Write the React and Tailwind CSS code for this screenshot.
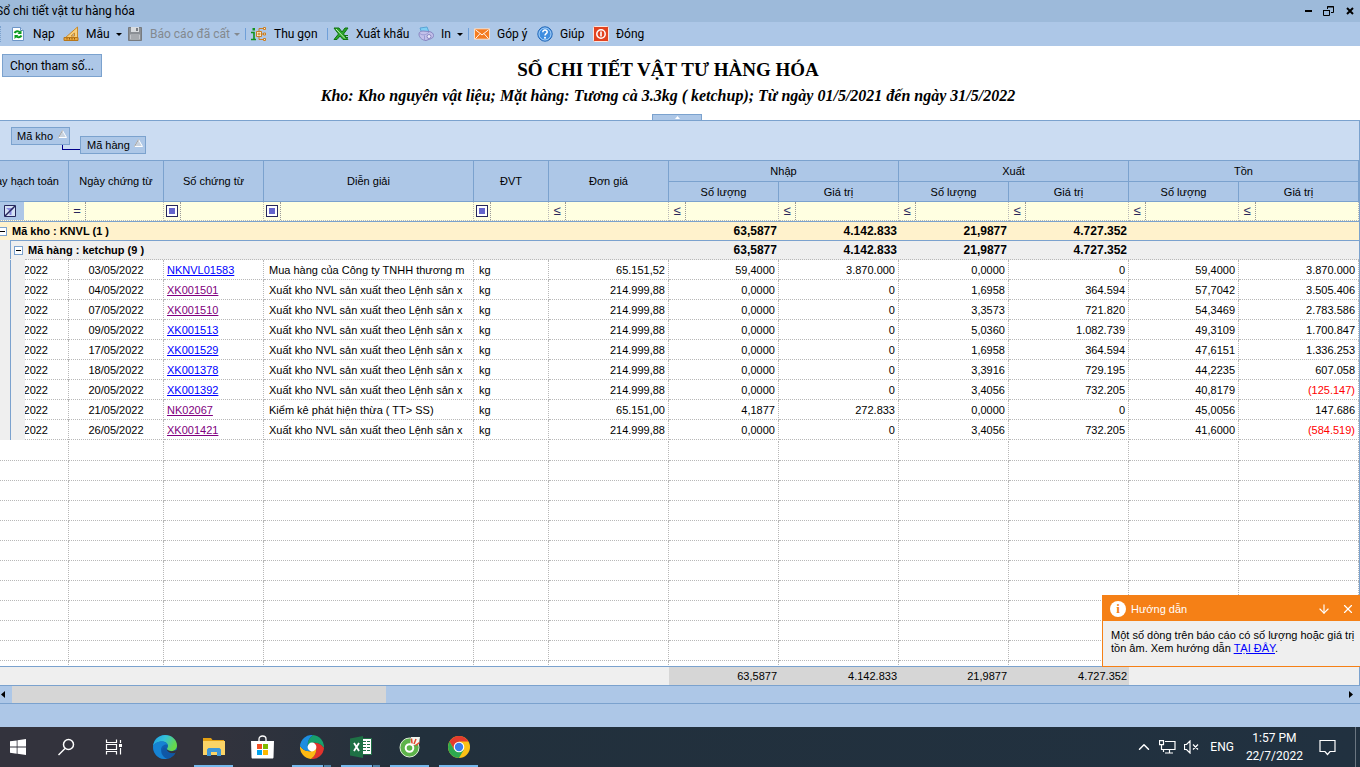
// App.jsx
import React from "react";
import clsx from "clsx";
import { ArrowDown, ChevronUp, X } from "lucide-react";

const rows = [
  ["03/05/2022", "NKNVL01583", "Mua hàng của Công ty TNHH thương m", "65.151,52", "59,4000", "3.870.000", "0,0000", "0", "59,4000", "3.870.000", false],
  ["04/05/2022", "XK001501", "Xuất kho NVL sản xuất theo Lệnh sản x", "214.999,88", "0,0000", "0", "1,6958", "364.594", "57,7042", "3.505.406", true],
  ["07/05/2022", "XK001510", "Xuất kho NVL sản xuất theo Lệnh sản x", "214.999,88", "0,0000", "0", "3,3573", "721.820", "54,3469", "2.783.586", true],
  ["09/05/2022", "XK001513", "Xuất kho NVL sản xuất theo Lệnh sản x", "214.999,88", "0,0000", "0", "5,0360", "1.082.739", "49,3109", "1.700.847", false],
  ["17/05/2022", "XK001529", "Xuất kho NVL sản xuất theo Lệnh sản x", "214.999,88", "0,0000", "0", "1,6958", "364.594", "47,6151", "1.336.253", false],
  ["18/05/2022", "XK001378", "Xuất kho NVL sản xuất theo Lệnh sản x", "214.999,88", "0,0000", "0", "3,3916", "729.195", "44,2235", "607.058", false],
  ["20/05/2022", "XK001392", "Xuất kho NVL sản xuất theo Lệnh sản x", "214.999,88", "0,0000", "0", "3,4056", "732.205", "40,8179", "(125.147)", false],
  ["21/05/2022", "NK02067", "Kiểm kê phát hiện thừa ( TT> SS)", "65.151,00", "4,1877", "272.833", "0,0000", "0", "45,0056", "147.686", true],
  ["26/05/2022", "XK001421", "Xuất kho NVL sản xuất theo Lệnh sản x", "214.999,88", "0,0000", "0", "3,4056", "732.205", "41,6000", "(584.519)", true],
];

const sums = ["63,5877", "4.142.833", "21,9877", "4.727.352"];

const filters = [
  ["Ngày chứng từ", "="],
  ["Số chứng từ", "box"],
  ["Diễn giải", "box"],
  ["ĐVT", "box"],
  ["Đơn giá", "≤"],
  ["Nhập số lượng", "≤"],
  ["Nhập giá trị", "≤"],
  ["Xuất số lượng", "≤"],
  ["Xuất giá trị", "≤"],
  ["Tồn số lượng", "≤"],
  ["Tồn giá trị", "≤"],
];

const emptyRows = Array.from({ length: 30 }, (_, i) => i);

/* ---------- toolbar icons ---------- */

const RefreshIcon = () => (
  <svg width="16" height="16" viewBox="0 0 16 16">
    <path d="M2.5 1.500h8l3 3v10h-11z" fill="#fdfefe" stroke="#6d95c7" />
    <path d="M10.500 1.500v3h3" fill="#cfe0f4" stroke="#6d95c7" />
    <path d="M4.500 7c1-2 4-2.500 5.500-.5M11.500 9.500c-1 2-4 2.500-5.500.5" fill="none" stroke="#0a9a1e" strokeWidth="2" />
    <path d="M11.500 4v4H7.500zM4.500 13V9h4z" fill="#0a9a1e" />
  </svg>
);

const RulerIcon = () => (
  <svg width="16" height="16" viewBox="0 0 16 16">
    <path d="M14.500 1v11H2z" fill="#f8cf7c" stroke="#c98a2d" />
    <path d="M11.500 7v3H8z" fill="#adc7e7" stroke="#c98a2d" />
    <path d="M1 11.500h14v3H1z" fill="#e9a63c" stroke="#b97718" />
    <path d="M4 12v1.500M6.500 12v1.500M9 12v1.500M11.500 12v1.500" stroke="#8f5a10" />
  </svg>
);

const SaveIcon = () => (
  <svg width="16" height="16" viewBox="0 0 16 16">
    <path d="M1.500 1.500h13v13h-13z" fill="#8b8f94" stroke="#777b80" />
    <path d="M4 1h8v5H4z" fill="#d9dcdf" />
    <path d="M9 2h2v3H9z" fill="#777b80" />
    <path d="M3 8.500h10v5H3z" fill="#c3c6ca" />
    <path d="M4 10h8M4 12h8" stroke="#8b8f94" />
  </svg>
);

const CollapseIcon = () => (
  <svg width="16" height="16" viewBox="0 0 16 16" fill="none">
    <path d="M0 6.500h3v7M0 13.500h5" stroke="#12921c" strokeWidth="1.600" />
    <path d="M1.500 2h2.500v2.500H1.500z" fill="#12921c" />
    <path d="M5.500 5.500h5v5h-5z" fill="#fff0c9" stroke="#c97d25" />
    <path d="M8 6.500v3M6.500 8h3M8 5V2.500h4M10.500 8H12M8 11v2.500h4" stroke="#c97d25" />
    <path d="M12.500 1.500h2v2h-2zM12.500 7h2v2h-2zM12.500 12.500h2v2h-2z" fill="#fff0c9" stroke="#c97d25" />
  </svg>
);

const ExcelMarkIcon = () => (
  <svg width="16" height="16" viewBox="0 0 16 16">
    <path d="M1 2h5l3 4 3-4h3l-4.500 6 4.500 5.500h-5L7 10l-3 3.500H1L5.500 8z" fill="#2ba52b" stroke="#117311" />
    <path d="M3 3l9 9.500" stroke="#c6f0b4" />
    <path d="M11 9.500h4M12 11.500h3" stroke="#117311" />
  </svg>
);

const PrinterIcon = () => (
  <svg width="16" height="16" viewBox="0 0 16 16">
    <path d="M2 2l7-1 2 5-7 1.500z" fill="#7fd0f5" stroke="#5aa4d6" />
    <path d="M1 8c0-2 2-3 4-3l6 .5c3 .5 4.500 2 4.500 4s-1.500 3-3.500 3.500l-4 1.500c-3 0-7-2.500-7-6.500z" fill="#c3c0ea" stroke="#8785c0" />
    <path d="M2 7.500c2 2 6 2 9-1.500M6.500 9.500v5" fill="none" stroke="#9a9bd3" />
    <circle cx="11" cy="10.500" r="2" fill="#eceafb" stroke="#8785c0" />
  </svg>
);

const MailIcon = () => (
  <svg width="17" height="14" viewBox="0 0 17 14">
    <path d="M.5 1.500h16v11H.5z" fill="#f47b20" stroke="#fbe3cf" />
    <path d="M1.500 2.500l7 5.500 7-5.500M1.500 12l5-5.500M15.500 12l-5-5.500" fill="none" stroke="#fff" />
  </svg>
);

const HelpIcon = () => (
  <svg width="16" height="16" viewBox="0 0 16 16" fill="none">
    <circle cx="8" cy="8" r="7.200" fill="#3f8ee0" stroke="#2467b5" />
    <circle cx="8" cy="8" r="6" stroke="#a9d2fa" />
    <path d="M5.800 6.200c0-3 4.600-2.800 4.400 0C10 7.700 8 7.800 8 9.500" stroke="#fff" strokeWidth="1.500" />
    <circle cx="8" cy="11.800" r="1" fill="#fff" />
  </svg>
);

const PowerIcon = () => (
  <svg width="16" height="16" viewBox="0 0 16 16" fill="none">
    <rect x=".5" y=".5" width="15" height="15" rx="1" fill="#e2421f" stroke="#fbe6df" />
    <circle cx="8" cy="8" r="4.200" stroke="#fff" strokeWidth="1.500" />
    <path d="M8 5.500v5" stroke="#fff" strokeWidth="1.600" />
  </svg>
);

const Caret = () => (
  <svg width="6" height="3" viewBox="0 0 6 3" className="ml-auto">
    <path d="M0 0h6L3 3z" fill="currentColor" />
  </svg>
);

/* ---------- taskbar icons ---------- */

const WindowsIcon = () => (
  <svg width="16" height="16" viewBox="0 0 16 16" fill="#fff">
    <path d="M0 2.300l6.700-.9v6.200H0zM7.500 1.300L16 0v7.600H7.500zM0 8.400h6.700v6.300L0 13.800zM7.500 8.400H16V16l-8.500-1.200z" />
  </svg>
);

const SearchIcon = () => (
  <svg width="18" height="18" viewBox="0 0 18 18" fill="none" stroke="#fff" strokeWidth="1.500">
    <circle cx="11.500" cy="6.500" r="5" />
    <path d="M8 10.500l-6.500 6.500" />
  </svg>
);

const TaskViewIcon = () => (
  <svg width="18" height="16" viewBox="0 0 18 16" fill="none" stroke="#fff" strokeWidth="1.200">
    <path d="M1.500.5v3h10v-3M1.500 15.500v-3h10v3M1.500 5.500h10v5h-10zM15.500 1v3M15.500 9v6.500" />
    <path d="M14 5h3v3h-3z" fill="#fff" stroke="none" />
  </svg>
);

const EdgeIcon = () => (
  <svg width="24" height="24" viewBox="0 0 24 24">
    <defs>
      <linearGradient id="edgeTop" x1="0" x2="1" y1="0" y2=".4">
        <stop offset="0" stopColor="#1d9fe4" />
        <stop offset=".5" stopColor="#35c1d8" />
        <stop offset="1" stopColor="#67d84a" />
      </linearGradient>
    </defs>
    <circle cx="12" cy="12" r="12" fill="#0f5fb0" />
    <path d="M0 11.500C.5 5 5.500 0 12 0c7 0 12 5 12 10.500 0 3.500-2.500 5.500-5.500 5.500s-4.500-1.200-4.500-2 1-1.200 1-3c0-2.500-2.500-4.500-6-4.500-4.500 0-8 2.500-9 5z" fill="url(#edgeTop)" />
    <path d="M0 11.500C1.500 8 4.500 6.500 8.500 6.500c3 0 5.500 1.500 6.300 3.500C12 8.500 8 11 8 15c0 4.500 3 8 6.500 8.700C6 25.500 0 19 0 11.500z" fill="#1683d3" />
    <path d="M13.700 14c-.5 2 2 4.500 5.300 4.500 1.800 0 3-.5 4.200-1l-1 1.800.8 4.700H24V15l-5.500 1.200c-2.500 0-4-1-4.800-2.200z" fill="#32323c" />
    <path d="M13.700 14c.5 3 4.300 5 8.500 4-1.500 3-4.700 5.300-8 5.700C9 22 7.500 15 11 12.500z" fill="#1057a5" />
  </svg>
);

const ExplorerIcon = () => (
  <svg width="22" height="18" viewBox="0 0 22 18">
    <path d="M0 0h8l1.500 2H21v4H0z" fill="#e5a113" />
    <path d="M0 3h22v14H0z" fill="#fcd466" />
    <path d="M4 18v-6.500L5.500 10h11l1.500 1.500V18h-4v-4H8v4z" fill="#3f97d8" />
  </svg>
);

const StoreIcon = () => (
  <svg width="23" height="24" viewBox="0 0 23 24">
    <path d="M8 7V4c0-4 7-4 7 0v3" fill="none" stroke="#fff" strokeWidth="1.300" />
    <path d="M0 6h23l-.5 16.500c0 .5-.5 1-1 1h-20c-.5 0-1-.5-1-1z" fill="#fff" />
    <path d="M6 9h5v5H6z" fill="#f25022" />
    <path d="M12 9h5v5h-5z" fill="#7fba00" />
    <path d="M6 15h5v5H6z" fill="#00a4ef" />
    <path d="M12 15h5v5h-5z" fill="#ffb900" />
  </svg>
);

const petals = [
  ["#17a06c", 0],
  ["#e2332c", 90],
  ["#fdb913", 180],
  ["#1c8de0", 270],
];

const SwirlIcon = () => (
  <svg width="24" height="24" viewBox="0 0 24 24">
    {petals.map(([color, angle]) => (
      <path
        key={color}
        d="M7.700 11C7.700 6 9 3 13 0A12 12 0 0 1 24 13C21 9 18 7.700 13 7.700L12 12z"
        fill={color}
        transform={`rotate(${angle} 12 12)`}
      />
    ))}
    <circle cx="12" cy="12" r="4.400" fill="#fff" />
  </svg>
);

const ExcelAppIcon = () => (
  <svg width="22" height="22" viewBox="0 0 22 22">
    <path d="M12 2.500h9.500v16H12z" fill="#fff" stroke="#1e7145" />
    <path d="M13 5.500h3M17 5.500h3M13 8.500h3M17 8.500h3M13 11.500h3M17 11.500h3M13 14.500h3M17 14.500h3" stroke="#1e7145" strokeWidth="1.200" />
    <path d="M0 2.500L13 0v22L0 19.500z" fill="#1e7145" />
    <path d="M4 7l5 8M9 7l-5 8" stroke="#fff" strokeWidth="1.800" />
  </svg>
);

const CocCocIcon = () => (
  <svg width="22" height="22" viewBox="0 0 22 22" fill="none">
    <circle cx="10.500" cy="11.500" r="9.500" fill="#5db34a" stroke="#dff0d8" />
    <path d="M11 10L12 1h9l-1 7z" fill="#f2f7f0" />
    <path d="M13 7.500L12.500 2.500M15 8l2-5M16.500 9.500l4-3" stroke="#e5442c" strokeWidth="1.500" />
    <circle cx="10.500" cy="12" r="3.800" fill="#5db34a" stroke="#fff" strokeWidth="2" />
  </svg>
);

const ChromeIcon = () => (
  <svg width="22" height="22" viewBox="0 0 22 22">
    <circle cx="11" cy="11" r="11" fill="#fbc116" />
    <path d="M1.500 5.500A11 11 0 0 1 20.500 5.500H11L6.200 13.700z" fill="#e33b2e" />
    <path d="M1.500 5.500A11 11 0 0 0 11 22l4.800-8.300H6.200z" fill="#2da94f" />
    <circle cx="11" cy="11" r="5.300" fill="#fff" />
    <circle cx="11" cy="11" r="4.200" fill="#3b7ded" />
  </svg>
);

const NetworkIcon = () => (
  <svg width="17" height="14" viewBox="0 0 17 14" fill="none" stroke="#fff" strokeWidth="1.200">
    <path d="M6 1.500h10v8H4.500M10.500 9.500v3.500M6 13h8" />
    <path d="M.5.600h4v4h-4zM2.500 5v4.500h2V12" />
  </svg>
);

const MutedIcon = () => (
  <svg width="15" height="14" viewBox="0 0 15 14" fill="none" stroke="#fff" strokeWidth="1.200">
    <path d="M.5 4.500h2L6 1v12L2.500 9.500h-2zM9 4.500l5 5M14 4.500l-5 5" />
  </svg>
);

const NoticeIcon = () => (
  <svg width="17" height="17" viewBox="0 0 17 17" fill="none" stroke="#fff" strokeWidth="1.200">
    <path d="M1 1.500h15v11h-5L8.500 15.500 6 12.500H1z" />
  </svg>
);

/* ---------- window parts ---------- */

function TitleBar() {
  return (
    <header className="flex h-[22px] shrink-0 items-center justify-between bg-[#9dbada] pr-[6px] font-[Roboto,sans-serif] text-xs">
      <h1 className="-ml-[4px]">Sổ chi tiết vật tư hàng hóa</h1>
      <div className="flex items-center gap-[11px]">
        <button aria-label="Thu nhỏ" className="h-[2px] w-[7px] bg-black" />
        <button aria-label="Khôi phục">
          <svg width="12" height="11" viewBox="0 0 12 11" fill="none" stroke="#000">
            <path d="M4.500 3V.5h6v6H8" />
            <path d="M4 1h7M0 4.500h7" />
            <path d="M.5 4.500h6v5h-6z" />
          </svg>
        </button>
        <button aria-label="Đóng cửa sổ">
          <svg width="8" height="8" viewBox="0 0 8 8" stroke="#000" strokeWidth="2">
            <path d="M1 1l6 6M7 1L1 7" />
          </svg>
        </button>
      </div>
    </header>
  );
}

function ToolButton({ icon: Icon, label, className, caret, disabled }) {
  return (
    <button disabled={disabled} className={clsx("flex h-full items-center pr-[5px] whitespace-nowrap", disabled && "text-[#83898f]", className)}>
      <span className="flex w-4 shrink-0 justify-center">
        <Icon />
      </span>
      <span className="ml-[7px]">{label}</span>
      {caret && <Caret />}
    </button>
  );
}

const Separator = () => <span className="mr-[5px] h-3 w-px bg-[#6f9fd8]" />;

function Toolbar() {
  return (
    <nav className="flex h-6 shrink-0 items-center bg-[#adc7e7] font-[Roboto,sans-serif] text-xs">
      <span className="mr-[9px] h-4 border-l border-dotted border-[#7ba2ce]" />
      <ToolButton icon={RefreshIcon} label="Nạp" className="w-[53px]" />
      <ToolButton icon={RulerIcon} label="Mẫu" className="w-16" caret />
      <ToolButton icon={SaveIcon} label="Báo cáo đã cất" className="w-[118px]" caret disabled />
      <Separator />
      <ToolButton icon={CollapseIcon} label="Thu gọn" className="w-[76px]" />
      <Separator />
      <ToolButton icon={ExcelMarkIcon} label="Xuất khẩu" className="w-[85px]" />
      <ToolButton icon={PrinterIcon} label="In" className="w-[50px]" caret />
      <Separator />
      <ToolButton icon={MailIcon} label="Góp ý" className="w-[63px]" />
      <ToolButton icon={HelpIcon} label="Giúp" className="w-14" />
      <ToolButton icon={PowerIcon} label="Đóng" />
    </nav>
  );
}

function ReportHeader() {
  return (
    <section className="flex h-[74px] shrink-0 flex-col justify-between bg-white pr-[6px]">
      <div className="grid grid-cols-[100px_1fr_118px] items-start px-[2px]">
        <button className="mt-2 h-[23px] border border-[#7ba2ce] bg-[#adc7e7] font-[Roboto,sans-serif] text-xs">Chọn tham số...</button>
        <div className="pt-3 text-center font-['Liberation_Serif',serif] font-bold">
          <h2 className="text-[19px] leading-6">SỔ CHI TIẾT VẬT TƯ HÀNG HÓA</h2>
          <p className="pt-1 text-base leading-5 italic">Kho: Kho nguyên vật liệu; Mặt hàng: Tương cà 3.3kg ( ketchup); Từ ngày 01/5/2021 đến ngày 31/5/2022</p>
        </div>
      </div>
      <button aria-label="Ẩn tiêu đề" className="mx-auto flex h-[6px] w-[50px] shrink-0 items-center justify-center border border-b-0 border-[#7ba2ce] bg-[#adc7e7]">
        <svg width="5" height="3" viewBox="0 0 5 3">
          <path d="M0 3h5L2.500 0z" fill="#fff" />
        </svg>
      </button>
    </section>
  );
}

const SortMark = () => (
  <svg width="9" height="8" viewBox="0 0 9 8" className="mb-1">
    <path d="M4.500.5L8.500 7.500H.5z" fill="#c9d3df" stroke="#fff" />
    <path d="M4.500.5L.5 7.500" stroke="#9a9a9a" />
  </svg>
);

function GroupPanel() {
  return (
    <div className="flex h-10 shrink-0 items-start gap-[10px] border-t border-r border-[#7ba2ce] bg-[#cbdcf2] pt-[6px] pl-[11px]">
      <div className="relative">
        <button className="flex h-[18px] w-[59px] items-center justify-between border border-[#7ba2ce] bg-[#adc7e7] pr-[2px] pl-[5px]">
          Mã kho <SortMark />
        </button>
        <span className="absolute top-full left-[51px] h-[5px] w-[18px] border-b border-l border-[#00008b]" />
      </div>
      <button className="mt-[9px] flex h-[18px] w-[66px] items-center justify-between border border-[#7ba2ce] bg-[#adc7e7] pr-[2px] pl-[6px]">
        Mã hàng <SortMark />
      </button>
    </div>
  );
}

const Columns = () => (
  <colgroup>
    <col className="w-[69px]" />
    <col className="w-[95px]" />
    <col className="w-[100px]" />
    <col />
    <col className="w-[75px]" />
    <col className="w-[120px]" />
    <col className="w-[110px]" />
    <col className="w-[120px]" />
    <col className="w-[110px]" />
    <col className="w-[120px]" />
    <col className="w-[110px]" />
    <col className="w-[120px]" />
  </colgroup>
);

const Th = ({ className, ...props }) => (
  <th className={clsx("border-r border-b border-[#7ba2ce] bg-[#adc7e7] p-0 text-center font-normal", className)} {...props} />
);

const Td = ({ className, ...props }) => (
  <td className={clsx("overflow-hidden border-r border-b border-dotted border-[#b8b8b8] p-0 whitespace-nowrap", className)} {...props} />
);

const Expander = ({ label }) => (
  <button aria-label={label} className="flex size-[9px] shrink-0 items-center justify-center border border-[#7ba2ce] bg-white">
    <span className="h-px w-[5px] bg-black" />
  </button>
);

function FilterRow() {
  return (
    <tr className="h-[19px]">
      <Td className="bg-[#ffffe1]">
        <div className="flex h-[18px]">
          <button aria-label="Xóa lọc" className="flex w-6 shrink-0 items-center bg-[#adc7e7] pl-1">
            <svg width="12" height="12" viewBox="0 0 12 12" fill="none">
              <path d="M.5.500h11v11H.5z" fill="#d5e2f4" stroke="#27275c" />
              <path d="M2 3h8L7.500 6v4h-2V6z" fill="#8a8ae0" />
              <path d="M1 11L11 1" stroke="#27275c" strokeWidth="1.500" />
            </svg>
          </button>
          <input aria-label="Lọc Ngày hạch toán" className="min-w-0 flex-1 outline-none" />
        </div>
      </Td>
      {filters.map(([name, op]) => (
        <Td key={name} className="bg-[#ffffe1]">
          <div className="flex h-[18px]">
            <button aria-label={`Điều kiện ${name}`} className="flex w-[17px] shrink-0 items-center justify-center border-r border-dotted border-[#999] text-[13px] text-[#27275c]">
              {op === "box" ? (
                <span className="flex size-3 items-center justify-center border border-[#27275c] bg-white">
                  <span className="size-[6px] bg-[#6565cc]" />
                </span>
              ) : (
                op
              )}
            </button>
            <input aria-label={`Lọc ${name}`} className="min-w-0 flex-1 px-1 outline-none" />
          </div>
        </Td>
      ))}
    </tr>
  );
}

// Every group row has a solid top line; the inner one starts at its own indent.
function GroupRow({ label, title, inner }) {
  const line = "h-[19px] border-t border-[#7ba2ce]";
  return (
    <tr className={inner ? "bg-[#efefef]" : "bg-[#fff2cc]"}>
      <td colSpan={6} className="p-0">
        <div className={clsx("flex items-center text-[11px] font-bold", line, inner && "ml-[10px] border-l pl-[3px]")}>
          <span className={clsx("flex items-center gap-[5px]", !inner && "-ml-[2px]")}>
            <Expander label={label} />
            {title}
          </span>
        </div>
      </td>
      {sums.map((value) => (
        <td key={value} className="p-0">
          <div className={clsx("pr-[2px] text-right text-xs leading-[18px] font-bold", line)}>{value}</div>
        </td>
      ))}
      <td colSpan={2} className="p-0">
        <div className={line} />
      </td>
    </tr>
  );
}

function DataRow({ row }) {
  const [date, code, note, price, inQty, inValue, outQty, outValue, qty, value, visited] = row;
  return (
    <tr className="h-5">
      <td className="border-r border-dotted border-[#b8b8b8] p-0">
        <div className="flex h-5">
          <span className="w-[11px] shrink-0 border-r border-[#7ba2ce] bg-[#efefef]" />
          <span className="w-[14px] shrink-0 bg-[#efefef]" />
          <span className="flex min-w-0 flex-1 items-center justify-end overflow-hidden border-b border-dotted border-[#b8b8b8] pr-5">{date}</span>
        </div>
      </td>
      <Td className="text-center">{date}</Td>
      <Td className="pl-[3px]">
        <a href={`#${code}`} className={clsx("underline", visited ? "text-[#800080]" : "text-[#0000ff]")}>
          {code}
        </a>
      </Td>
      <Td className="pl-[5px]">{note}</Td>
      <Td className="pl-[5px]">kg</Td>
      {[price, inQty, inValue, outQty, outValue, qty, value].map((v, i) => (
        <Td key={i} className={clsx("pr-[3px] text-right", v.startsWith("(") && "text-[#ff0000]")}>
          {v}
        </Td>
      ))}
    </tr>
  );
}

function ReportGrid() {
  return (
    <main className="relative min-h-0 flex-1 border-b border-[#7ba2ce]">
      <div className="h-full overflow-hidden border-r border-[#7ba2ce] bg-white">
        <table className="w-full table-fixed border-separate border-spacing-0 border-t border-[#7ba2ce]">
          <Columns />
          <thead>
            <tr className="h-[21px]">
              <Th rowSpan={2}>
                <div className="flex justify-end overflow-hidden pr-[9px] whitespace-nowrap">Ngày hạch toán</div>
              </Th>
              <Th rowSpan={2}>Ngày chứng từ</Th>
              <Th rowSpan={2}>Số chứng từ</Th>
              <Th rowSpan={2}>Diễn giải</Th>
              <Th rowSpan={2}>ĐVT</Th>
              <Th rowSpan={2}>Đơn giá</Th>
              <Th colSpan={2}>Nhập</Th>
              <Th colSpan={2}>Xuất</Th>
              <Th colSpan={2}>Tồn</Th>
            </tr>
            <tr className="h-5">
              <Th>Số lượng</Th>
              <Th>Giá trị</Th>
              <Th>Số lượng</Th>
              <Th>Giá trị</Th>
              <Th>Số lượng</Th>
              <Th>Giá trị</Th>
            </tr>
            <FilterRow />
          </thead>
          <tbody>
            <GroupRow label="Thu gọn Mã kho" title="Mã kho : KNVL (1 )" />
            <GroupRow label="Thu gọn Mã hàng" title="Mã hàng : ketchup (9 )" inner />
            <tr aria-hidden="true">
              <td className="h-px bg-[#efefef] p-0">
                <div className="ml-[25px] border-b border-dotted border-[#b8b8b8]" />
              </td>
              <td colSpan={11} className="border-b border-dotted border-[#b8b8b8] bg-[#efefef] p-0" />
            </tr>
            {rows.map((row) => (
              <DataRow key={row[1]} row={row} />
            ))}
            <tr aria-hidden="true">
              <td colSpan={12} className="h-px p-0" />
            </tr>
            {emptyRows.map((i) => (
              <tr key={i} className="h-5" aria-hidden="true">
                {Array.from({ length: 12 }, (_, c) => (
                  <Td key={c} />
                ))}
              </tr>
            ))}
          </tbody>
        </table>
      </div>
      <GuidePopup />
    </main>
  );
}

function GuidePopup() {
  return (
    <aside className="absolute right-0 -bottom-px flex h-[72px] w-[258px] flex-col border border-r-0 border-[#f58016] bg-[#efefef]">
      <div className="flex h-[25px] shrink-0 items-center bg-[#f58016] pr-[5px] pl-[7px] text-white">
        <span className="flex size-4 items-center justify-center rounded-full bg-white font-['Liberation_Serif',serif] text-[13px] leading-4 font-bold text-[#f58016]">i</span>
        <span className="ml-[5px] flex-1">Hướng dẫn</span>
        <button aria-label="Thu gọn hướng dẫn" className="mr-[10px]">
          <ArrowDown size={14} />
        </button>
        <button aria-label="Đóng hướng dẫn">
          <X size={14} />
        </button>
      </div>
      <p className="pt-2 pl-2 leading-[13px]">
        Một số dòng trên báo cáo có số lượng hoặc giá trị tồn âm. Xem hướng dẫn{" "}
        <a href="#huong-dan" className="text-[#0000ff] underline">
          TẠI ĐÂY
        </a>
        .
      </p>
    </aside>
  );
}

function Totals() {
  return (
    <div className="shrink-0 border-r border-b border-[#7ba2ce] bg-[#efefef]">
      <table className="w-full table-fixed border-separate border-spacing-0">
        <Columns />
        <tbody>
          <tr className="h-[18px]">
            <td colSpan={6} className="p-0" />
            {sums.map((value) => (
              <td key={value} className="bg-[#d6d6d6] p-0 pr-[2px] text-right">
                {value}
              </td>
            ))}
            <td colSpan={2} className="p-0" />
          </tr>
        </tbody>
      </table>
    </div>
  );
}

function ScrollBar() {
  return (
    <div className="flex h-[18px] shrink-0 border-b border-[#7ba2ce] bg-[#adc7e7]">
      <button aria-label="Cuộn trái" className="flex w-3 items-center pl-px">
        <svg width="4" height="7" viewBox="0 0 4 7">
          <path d="M4 0v7L0 3.500z" />
        </svg>
      </button>
      <div className="flex-1">
        <div className="h-full w-[28%] bg-[#d6d6d6]" />
      </div>
      <button aria-label="Cuộn phải" className="flex w-3 items-center pl-px">
        <svg width="4" height="7" viewBox="0 0 4 7">
          <path d="M0 0v7l4-3.500z" />
        </svg>
      </button>
    </div>
  );
}

function TaskButton({ icon: Icon, label, open, stacked }) {
  return (
    <button aria-label={label} className="relative flex h-full w-[49px] items-center justify-center">
      <Icon />
      {open && (
        <span className="absolute inset-x-[5px] bottom-0 flex h-[2px]">
          <span className="flex-1 bg-[#76b9ed]" />
          {stacked && <span className="w-2 border-l border-[#22303e] bg-[#5286ac]" />}
        </span>
      )}
    </button>
  );
}

function Taskbar() {
  return (
    <footer className="flex h-10 shrink-0 items-center bg-linear-to-r from-[#33333d] from-15% via-[#22303c] via-30% to-[#213140] font-[Roboto,sans-serif] text-xs text-white">
      <button aria-label="Start" className="mr-[6px] flex h-full w-9 items-center justify-center">
        <WindowsIcon />
      </button>
      <button aria-label="Search" className="flex h-full w-12 items-center justify-center">
        <SearchIcon />
      </button>
      <button aria-label="Task View" className="mr-[2px] flex h-full w-12 items-center justify-center">
        <TaskViewIcon />
      </button>
      <TaskButton icon={EdgeIcon} label="Edge" />
      <TaskButton icon={ExplorerIcon} label="File Explorer" open />
      <TaskButton icon={StoreIcon} label="Store" />
      <TaskButton icon={SwirlIcon} label="Browser" open stacked />
      <TaskButton icon={ExcelAppIcon} label="Excel" open stacked />
      <TaskButton icon={CocCocIcon} label="Cốc Cốc" open />
      <TaskButton icon={ChromeIcon} label="Chrome" open />
      <div className="ml-auto flex h-full items-center">
        <button aria-label="Hidden icons" className="mr-[6px]">
          <ChevronUp size={18} strokeWidth={2} />
        </button>
        <button aria-label="Network" className="mr-2">
          <NetworkIcon />
        </button>
        <button aria-label="Volume" className="mr-[11px]">
          <MutedIcon />
        </button>
        <span className="mr-3">ENG</span>
        <div className="mr-4 text-center leading-[18px]">
          <p>1:57 PM</p>
          <p>22/7/2022</p>
        </div>
        <button aria-label="Notifications" className="mr-[19px]">
          <NoticeIcon />
        </button>
        <span className="h-full w-[5px] border-l border-[#6b7681]" />
      </div>
    </footer>
  );
}

export default function App() {
  return (
    <div className="flex h-screen flex-col overflow-hidden bg-[#adc7e7] font-['Liberation_Sans',Arial,sans-serif] text-[11px] leading-[14px] text-black">
      <TitleBar />
      <Toolbar />
      <ReportHeader />
      <GroupPanel />
      <ReportGrid />
      <Totals />
      <ScrollBar />
      <div className="h-[23px] shrink-0" />
      <Taskbar />
    </div>
  );
}
